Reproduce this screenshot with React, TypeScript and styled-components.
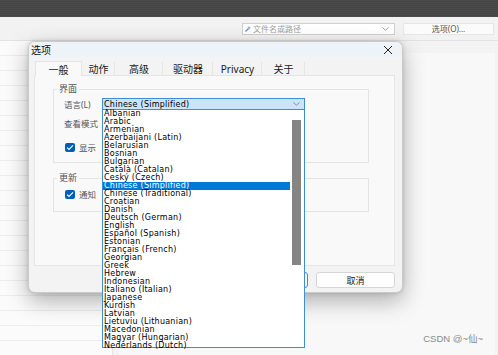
import styled, { createGlobalStyle } from 'styled-components';

const LANGUAGES = [
  'Albanian',
  'Arabic',
  'Armenian',
  'Azerbaijani (Latin)',
  'Belarusian',
  'Bosnian',
  'Bulgarian',
  'Català (Catalan)',
  'Ceský (Czech)',
  'Chinese (Simplified)',
  'Chinese (Traditional)',
  'Croatian',
  'Danish',
  'Deutsch (German)',
  'English',
  'Español (Spanish)',
  'Estonian',
  'Français (French)',
  'Georgian',
  'Greek',
  'Hebrew',
  'Indonesian',
  'Italiano (Italian)',
  'Japanese',
  'Kurdish',
  'Latvian',
  'Lietuviu (Lithuanian)',
  'Macedonian',
  'Magyar (Hungarian)',
  'Nederlands (Dutch)',
];

const SELECTED = 'Chinese (Simplified)';

const TABS = [
  { label: '一般', width: 47 },
  { label: '动作', width: 33 },
  { label: '高级', width: 48 },
  { label: '驱动器', width: 50 },
  { label: 'Privacy', width: 49 },
  { label: '关于', width: 43 },
];

const GlobalStyle = createGlobalStyle`
  html, body {
    margin: 0;
    padding: 0;
  }
  body {
    width: 498px;
    height: 355px;
    overflow: hidden;
    background: #f3f3f3;
    font-family: "Noto Sans", "Noto Sans CJK SC", sans-serif;
  }
`;

const Check = () => (
  <svg width="8" height="7" viewBox="0 0 8 7">
    <path d="M1 3.6 L3 5.4 L7 1.4" fill="none" stroke="#fff" strokeWidth="1.1" />
  </svg>
);

const Chevron = ({ color = '#888' }: { color?: string }) => (
  <svg width="7" height="4" viewBox="0 0 7 4">
    <path d="M0.5 0.5 L3.5 3.3 L6.5 0.5" fill="none" stroke={color} strokeWidth="0.9" />
  </svg>
);

const App = () => {
  return (
    <>
      <GlobalStyle />
      <S.Screen>
        <S.TopBar />
        <S.Toolbar>
          <S.SearchBox>
            <S.SearchHint>
              <svg width="6" height="6" viewBox="0 0 6 6">
                <path d="M0.5 5.5 L3.5 2.5" stroke="#5a8fd0" strokeWidth="1.2" />
                <circle cx="4" cy="2" r="1.4" fill="#8fb6e6" />
              </svg>
              文件名或路径
            </S.SearchHint>
            <Chevron color="#999" />
          </S.SearchBox>
          <S.ToolButton>选项(O)...</S.ToolButton>
        </S.Toolbar>
        <S.Body>
          <S.FileList>
            {Array.from({ length: 21 }).map((_, i) => (
              <S.FileRow key={i} />
            ))}
          </S.FileList>
          <S.Preview>
            <S.PreviewPane />
          </S.Preview>
        </S.Body>

        <S.Dialog>
          <S.TitleBar>
            <span>选项</span>
            <svg width="10" height="10" viewBox="0 0 10 10">
              <path d="M1 1 L9 9 M9 1 L1 9" stroke="#222" strokeWidth="1" />
            </svg>
          </S.TitleBar>
          <S.TabStrip>
            {TABS.map((tab, i) => (
              <S.Tab key={tab.label} $width={tab.width} $active={i === 0}>
                {tab.label}
              </S.Tab>
            ))}
          </S.TabStrip>
          <S.Panel>
            <S.Group $height={80}>
              <S.Legend>界面</S.Legend>
              <S.GroupBody>
                <S.FieldRow>
                  <S.Label>语言(L)</S.Label>
                  <S.Select>
                    <span>{SELECTED}</span>
                    <Chevron />
                    <S.DropList>
                      <S.Options>
                        {LANGUAGES.map((lang) => (
                          <S.Option key={lang} $selected={lang === SELECTED}>
                            {lang}
                          </S.Option>
                        ))}
                      </S.Options>
                      <S.ScrollTrack>
                        <S.ScrollThumb />
                      </S.ScrollTrack>
                    </S.DropList>
                  </S.Select>
                </S.FieldRow>
                <S.FieldRow $gap={7}>
                  <S.Label>查看模式</S.Label>
                </S.FieldRow>
                <S.CheckRow $gap={13}>
                  <S.CheckBox>
                    <Check />
                  </S.CheckBox>
                  <S.CheckText>显示</S.CheckText>
                </S.CheckRow>
              </S.GroupBody>
            </S.Group>
            <S.Group $height={40}>
              <S.Legend>更新</S.Legend>
              <S.GroupBody $top={5}>
                <S.CheckRow>
                  <S.CheckBox>
                    <Check />
                  </S.CheckBox>
                  <S.CheckText>通知</S.CheckText>
                </S.CheckRow>
              </S.GroupBody>
            </S.Group>
          </S.Panel>
          <S.ButtonRow>
            <S.DialogButton $primary>确定</S.DialogButton>
            <S.DialogButton>取消</S.DialogButton>
          </S.ButtonRow>
        </S.Dialog>

        <S.Watermark>CSDN @~仙~</S.Watermark>
      </S.Screen>
    </>
  );
};

const S = {
  Screen: styled.div`
    position: relative;
    width: 498px;
    height: 355px;
    overflow: hidden;
    display: flex;
    flex-direction: column;
    background: #f3f3f3;
  `,

  TopBar: styled.div`
    height: 17px;
    flex-shrink: 0;
    background: repeating-linear-gradient(#4b4b4b 0 1px, #454545 1px 2px);
  `,

  Toolbar: styled.div`
    height: 23px;
    flex-shrink: 0;
    display: flex;
    align-items: center;
    justify-content: flex-end;
    gap: 8px;
    padding-right: 4px;
    background: #f2f2f2;
  `,

  SearchBox: styled.div`
    box-sizing: border-box;
    width: 153px;
    height: 12px;
    display: flex;
    align-items: center;
    justify-content: space-between;
    padding: 0 5px 0 2px;
    background: #fff;
    border: 1px solid #cfcfcf;
  `,

  SearchHint: styled.span`
    display: flex;
    align-items: center;
    gap: 2px;
    font-size: 8px;
    line-height: 10px;
    color: #a0a0a0;
  `,

  ToolButton: styled.div`
    box-sizing: border-box;
    width: 91px;
    height: 12px;
    display: flex;
    align-items: center;
    justify-content: center;
    font-size: 8px;
    color: #555;
    background: #fbfbfb;
    border: 1px solid #e6e6e6;
  `,

  Body: styled.div`
    flex: 1;
    display: flex;
    border-top: 1px solid #e2e2e2;
  `,

  FileList: styled.div`
    width: 112px;
    display: flex;
    flex-direction: column;
    background: #fbfbfb;
    border-right: 1px solid #e4e4e4;
  `,

  FileRow: styled.div`
    height: 14px;
    flex-shrink: 0;
    border-bottom: 1px solid #ededed;
  `,

  Preview: styled.div`
    flex: 1;
    padding: 12px 3px 0 6px;
    display: flex;
  `,

  PreviewPane: styled.div`
    flex: 1;
    background: #f8f8f8;
  `,

  Dialog: styled.div`
    position: absolute;
    left: 28px;
    top: 41px;
    box-sizing: border-box;
    width: 375px;
    height: 252px;
    display: flex;
    flex-direction: column;
    background: #f3f3f3;
    border: 1px solid #cacaca;
    border-radius: 7px;
    box-shadow: 0 8px 22px rgba(0, 0, 0, 0.3), 0 0 4px rgba(0, 0, 0, 0.15);
  `,

  TitleBar: styled.div`
    height: 15px;
    display: flex;
    align-items: center;
    justify-content: space-between;
    padding: 0 9px 0 2px;
    font-size: 10px;
    color: #111;
    background: #eef3f8;
    border-radius: 6px 6px 0 0;
  `,

  TabStrip: styled.div`
    display: flex;
    margin-top: 4px;
    padding-left: 6px;
    height: 14px;
  `,

  Tab: styled.div<{ $width: number; $active?: boolean }>`
    box-sizing: border-box;
    width: ${({ $width }) => $width}px;
    height: ${({ $active }) => ($active ? 15 : 14)}px;
    display: flex;
    align-items: center;
    justify-content: center;
    font-size: 10px;
    color: #1a1a1a;
    position: relative;
    z-index: ${({ $active }) => ($active ? 2 : 1)};
    background: ${({ $active }) => ($active ? '#f9f9f9' : '#f3f3f3')};
    border: 1px solid ${({ $active }) => ($active ? '#e3e3e3' : 'transparent')};
    border-right-color: #e6e6e6;
    border-bottom: none;
  `,

  Panel: styled.div`
    box-sizing: border-box;
    height: 191px;
    margin: 0 7px 0 5px;
    padding: 7px 0 0 18px;
    display: flex;
    flex-direction: column;
    gap: 9px;
    background: #f9f9f9;
    border: 1px solid #e5e5e5;
  `,

  Group: styled.fieldset<{ $height: number }>`
    box-sizing: border-box;
    width: 316px;
    height: ${({ $height }) => $height}px;
    margin: 0;
    padding: 0 0 0 10px;
    border: 1px solid #e4e4e4;
    min-width: 0;
  `,

  Legend: styled.legend`
    margin-left: -7px;
    padding: 0 2px;
    font-size: 9px;
    line-height: 12px;
    color: #555;
  `,

  GroupBody: styled.div<{ $top?: number }>`
    display: flex;
    flex-direction: column;
    padding-top: ${({ $top }) => $top ?? 3}px;
  `,

  FieldRow: styled.div<{ $gap?: number }>`
    display: flex;
    align-items: center;
    height: 12px;
    margin-top: ${({ $gap }) => $gap ?? 0}px;
  `,

  Label: styled.span`
    width: 37px;
    flex-shrink: 0;
    font-size: 8.5px;
    color: #555;
    white-space: nowrap;
  `,

  Select: styled.div`
    position: relative;
    box-sizing: border-box;
    width: 203px;
    height: 12px;
    margin-left: 1px;
    display: flex;
    align-items: center;
    justify-content: space-between;
    padding: 0 4px 0 1px;
    background: #cce4f7;
    border: 1px solid #3c8ed8;
    font-family: "DejaVu Sans", sans-serif;
    font-size: 8px;
    letter-spacing: 0.25px;
    color: #000;
  `,

  DropList: styled.div`
    position: absolute;
    left: -1px;
    top: 10px;
    box-sizing: border-box;
    width: 203px;
    height: 239px;
    display: flex;
    background: #fff;
    border: 1px solid #3c8ed8;
    z-index: 10;
  `,

  Options: styled.div`
    width: 187px;
    display: flex;
    flex-direction: column;
  `,

  Option: styled.div<{ $selected?: boolean }>`
    height: 8px;
    line-height: 8px;
    padding-left: 1px;
    font-family: "DejaVu Sans", sans-serif;
    font-size: 8px;
    letter-spacing: 0.25px;
    white-space: nowrap;
    color: ${({ $selected }) => ($selected ? '#fff' : '#000')};
    background: ${({ $selected }) => ($selected ? '#0078d7' : 'transparent')};
  `,

  ScrollTrack: styled.div`
    flex: 1;
    padding: 10px 3px 0 2px;
    background: #fff;
  `,

  ScrollThumb: styled.div`
    height: 145px;
    background: #858585;
  `,

  CheckRow: styled.div<{ $gap?: number }>`
    display: flex;
    align-items: center;
    gap: 4px;
    height: 10px;
    margin-top: ${({ $gap }) => $gap ?? 0}px;
    padding-left: 1px;
  `,

  CheckBox: styled.div`
    width: 10px;
    height: 9px;
    flex-shrink: 0;
    display: flex;
    align-items: center;
    justify-content: center;
    background: #005fb8;
    border-radius: 2px;
  `,

  CheckText: styled.span`
    font-size: 8.5px;
    color: #555;
    white-space: nowrap;
  `,

  ButtonRow: styled.div`
    display: flex;
    justify-content: flex-end;
    gap: 8px;
    margin: 6px 7px 0 0;
  `,

  DialogButton: styled.div<{ $primary?: boolean }>`
    box-sizing: border-box;
    width: 79px;
    height: 16px;
    display: flex;
    align-items: center;
    justify-content: center;
    font-size: 9px;
    color: #222;
    background: #fdfdfd;
    border: 1px solid ${({ $primary }) => ($primary ? '#3c8ed8' : '#d6d6d6')};
    border-radius: 3px;
  `,

  Watermark: styled.div`
    position: absolute;
    right: 15px;
    bottom: 10px;
    font-family: "Liberation Sans", "Noto Sans CJK SC", sans-serif;
    font-size: 9.5px;
    color: #8a8a8a;
  `,
};

export default App;
